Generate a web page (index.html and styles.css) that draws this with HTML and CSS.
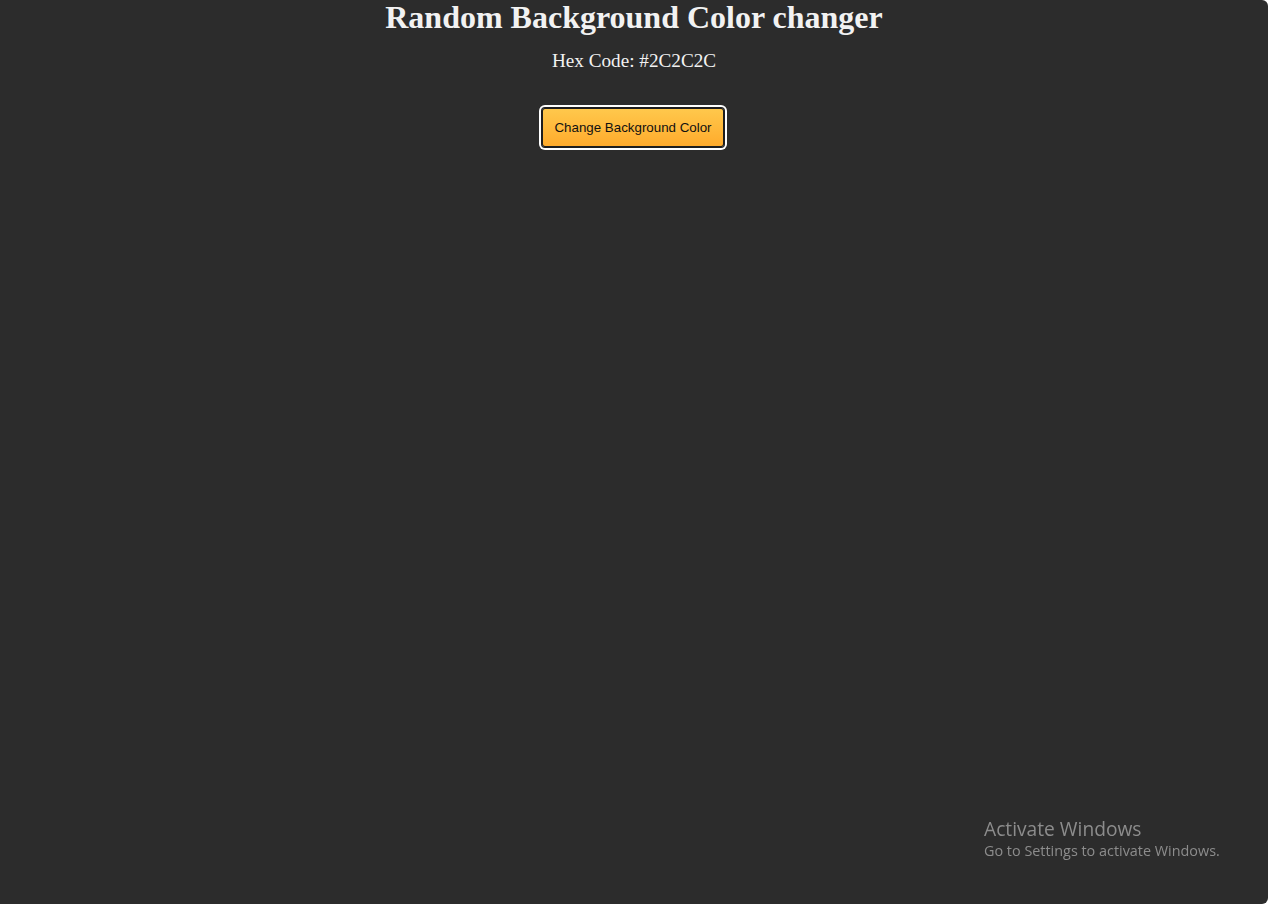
FILE: index.html
```html
<!DOCTYPE html>
<html lang="en">
<head>
<meta charset="utf-8">
<title>Random Background Color changer</title>
<link rel="stylesheet" href="styles.css">
</head>
<body>
<main class="page">
  <h1 class="title">Random Background Color changer</h1>
  <p class="hex">Hex Code: <span class="hex-value">#2C2C2C</span></p>
  <button class="change-btn" type="button">Change Background Color</button>
</main>
<div class="watermark">
  <div class="wm-title">Activate Windows</div>
  <div class="wm-sub">Go to Settings to activate Windows.</div>
</div>
</body>
</html>
```

FILE: styles.css
```css
html {
  background: #ffffff;
  height: 100%;
}
body {
  margin: 0;
  height: 100%;
  background: #2c2c2c;
  border-radius: 0 6px 6px 0;
  font-family: "Liberation Serif", "Times New Roman", serif;
  color: #f2f2f2;
}
.page {
  display: flex;
  flex-direction: column;
  align-items: center;
  text-align: center;
}
.title {
  margin: 0;
  font-size: 32px;
  font-weight: bold;
  line-height: 34px;
}
.hex {
  margin: 16px 0 0;
  font-size: 19.2px;
  line-height: 22px;
}
.change-btn {
  margin: 36px 2px 0 0;
  font-family: "Liberation Sans", Arial, sans-serif;
  font-size: 13.33px;
  color: #111;
  padding: 11px 11px;
  line-height: 15px;
  border: 1px solid #1e1e1e;
  border-radius: 3px;
  background: linear-gradient(#ffc84c, #ffab2c);
  box-shadow: 0 0 0 1px #1e1e1e, 0 0 0 3px #ffffff;
  cursor: pointer;
}
.watermark {
  position: fixed;
  left: 984px;
  top: 816px;
  font-family: "Open Sans", "Noto Sans", sans-serif;
  color: #8c8c8c;
}
.wm-title {
  font-size: 19.2px;
  line-height: 25px;
}
.wm-sub {
  font-size: 14.4px;
  line-height: 20px;
}
```
